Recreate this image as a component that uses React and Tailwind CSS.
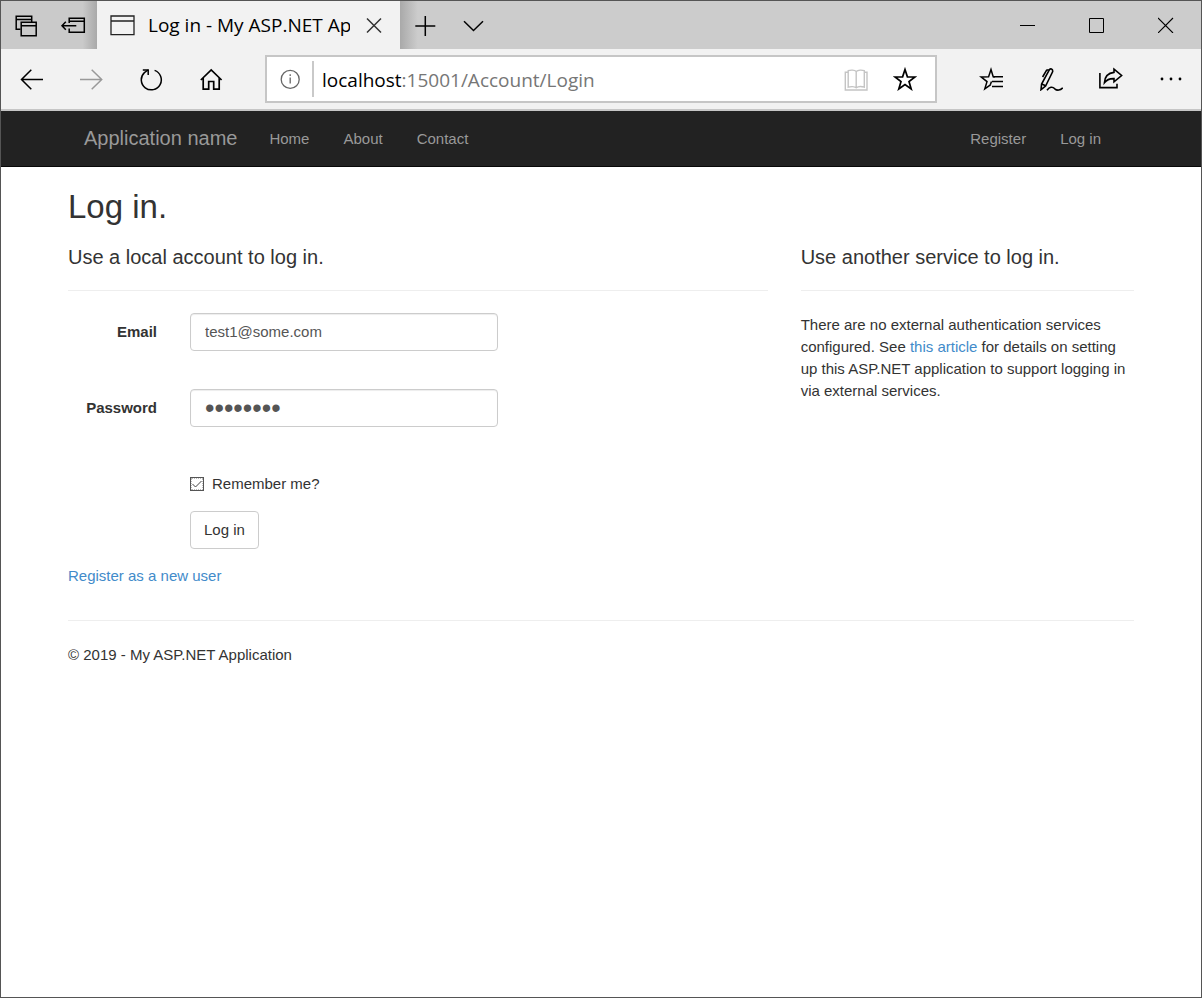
import { useState } from "react";

function Icon({ w = 24, h = 24, sw = 1.5, className = "", children }) {
  return (
    <svg
      width={w}
      height={h}
      viewBox={`0 0 ${w} ${h}`}
      fill="none"
      stroke="currentColor"
      strokeWidth={sw}
      className={`block shrink-0 ${className}`}
      aria-hidden="true"
    >
      {children}
    </svg>
  );
}

function IconButton({ label, className = "", children }) {
  return (
    <button type="button" aria-label={label} className={`flex shrink-0 items-center justify-center ${className}`}>
      {children}
    </button>
  );
}

function TitleBar() {
  return (
    <div className="flex h-12 bg-[#cccccc] text-black">
      <div className="flex bg-linear-to-r from-[#cacaca] from-85% to-[#a9a9a9]">
        <IconButton label="Tabs you've set aside" className="w-12">
          <Icon>
            <path d="M7.5 16.2H3.2V3.2H18.7V9M3.2 6.4H18.7" />
            <path d="M8.2 9.2H23.2V22.8H8.2ZM8.2 12.7H23.2" />
          </Icon>
        </IconButton>
        <IconButton label="Set these tabs aside" className="w-12">
          <Icon w={26}>
            <path d="M9.2 10V5.2H24.3V19.2H9.2V15.5M9.2 8.3H24.3" />
            <path d="M2 12.8H16.3M5.8 8.8L2 12.8L5.8 16.8" />
          </Icon>
        </IconButton>
      </div>
      <div className="flex w-[303px] items-center bg-[#f2f2f2] pl-[13px] pr-3">
        <Icon w={25} h={21} sw={1.3} className="text-[#222]">
          <path d="M1 1H24V19.6H1ZM1 6H24" />
        </Icon>
        <span className="ml-[13px] w-[202px] overflow-hidden whitespace-nowrap font-['Open_Sans','Noto_Sans',sans-serif] text-[19px] leading-7">
          Log in - My ASP.NET Application
        </span>
        <IconButton label="Close tab" className="ml-3 size-6">
          <Icon className="text-[#333]">
            <path d="M5 5.5L19 19.5M19 5.5L5 19.5" />
          </Icon>
        </IconButton>
      </div>
      <div className="flex flex-1 bg-linear-to-r from-[#a9a9a9] to-[#cccccc] to-3%">
        <IconButton label="New tab" className="w-[50px]">
          <Icon>
            <path d="M12.3 3V23M2.3 13H22.3" />
          </Icon>
        </IconButton>
        <IconButton label="Show tab previews" className="w-12">
          <Icon>
            <path d="M2 8.3L11.5 17.5L21 8.3" />
          </Icon>
        </IconButton>
      </div>
      <div className="flex pr-px">
        <IconButton label="Minimize" className="w-[69px]">
          <Icon w={16} h={16} sw={1}>
            <path d="M0 8.5H15" />
          </Icon>
        </IconButton>
        <IconButton label="Maximize" className="w-[69px]">
          <Icon w={16} h={16} sw={1}>
            <path d="M0.5 1.5H14.5V15.5H0.5Z" />
          </Icon>
        </IconButton>
        <IconButton label="Close" className="w-[69px]">
          <Icon w={16} h={16} sw={1.1}>
            <path d="M0 1L15 16M15 1L0 16" />
          </Icon>
        </IconButton>
      </div>
    </div>
  );
}

const STAR = "M12 2.5L14.4 9.8L22 10L16 14.6L18.2 22L12 17.6L5.8 22L8 14.6L2 10L9.6 9.8Z";

function Toolbar() {
  return (
    <div className="flex h-[62px] items-center border-b-2 border-[#c6c6c6] bg-[#f2f2f2] text-black">
      <IconButton label="Back" className="h-12 w-[60px]">
        <Icon>
          <path d="M2 12.5H24M12.3 2.8L2.5 12.5L12.3 22.3" />
        </Icon>
      </IconButton>
      <IconButton label="Forward" className="h-12 w-[60px] text-[#999]">
        <Icon>
          <path d="M1 12.5H23M12.7 2.8L22.7 12.5L12.7 22.3" />
        </Icon>
      </IconButton>
      <IconButton label="Refresh" className="h-12 w-[60px]">
        <Icon>
          <path d="M15.6 3.4A10 10 0 1 1 5.4 5.6L9 3" />
          <path d="M3.8 2.9H9.2V8" />
        </Icon>
      </IconButton>
      <IconButton label="Home" className="h-12 w-[60px]">
        <Icon sw={1.7}>
          <path d="M1.8 13L12.2 2.9L22.6 13M4.2 11V22.2H9.7V14.5H14.7V22.2H20.2V11" />
        </Icon>
      </IconButton>

      <div className="mx-6 flex h-12 min-w-0 flex-1 items-center border-2 border-[#c6c6c6] bg-white">
        <IconButton label="Site information" className="w-[45px] text-[#666]">
          <Icon sw={1.3}>
            <circle cx="12.2" cy="12.4" r="9" />
            <path d="M12.2 10.6V16.6M12.2 7.3V8.9" />
          </Icon>
        </IconButton>
        <span className="h-9 w-0.5 bg-[#c9c9c9]" />
        <span className="ml-2 flex-1 whitespace-nowrap pt-px font-['Open_Sans','Noto_Sans',sans-serif] text-[19px] leading-7 text-[#767676]">
          <span className="text-black">localhost</span>:15001/Account/Login
        </span>
        <IconButton label="Reading view" className="w-[49px] text-[#c4c4c4]">
          <Icon sw={1.4}>
            <path d="M12.2 4.5C10.5 2.8 6.5 2.8 4.2 3.7V20.2C6.5 19.4 10.5 19.4 12.2 20.8C14 19.4 18 19.4 20.3 20.2V3.7C18 2.8 14 2.8 12.2 4.5V20.8" />
            <path d="M4 5.2H1.3V23H23V5.2H20.5" />
          </Icon>
        </IconButton>
        <IconButton label="Add to favorites" className="mr-1.5 w-[49px]">
          <Icon sw={1.7}>
            <path d={STAR} />
          </Icon>
        </IconButton>
      </div>

      <IconButton label="Favorites" className="h-12 w-[60px]">
        <Icon>
          <path d="M16 9.7H14.2L12 2.5L9.6 9.7L2 9.9L8 14.6L5.8 21.8L11.8 17.6" />
          <path d="M14.2 9.7H24M13 14.5H24M13 19.5H24" />
          <path d="M12.5 14.5L11.3 17.8" />
        </Icon>
      </IconButton>
      <IconButton label="Add notes" className="h-12 w-[60px]">
        <Icon sw={1.6}>
          <path d="M10 3.4C11.2 0.8 14.2 2 13.6 4.8L6.6 19L2 22.7L2.6 17L10 3.4Z" />
          <path d="M9.8 2.8L7.6 3.2L3.6 10M2.8 17L6.6 18.8" />
          <path d="M8 23.2C10.5 19.8 13.5 19.4 15.8 21.8C18 23.9 21.5 23.4 23.8 20.8" />
        </Icon>
      </IconButton>
      <IconButton label="Share" className="h-12 w-[60px]">
        <Icon sw={1.6}>
          <path d="M0.9 6V20.6H18V16.8" />
          <path d="M15 2.2L22.6 8.5L15 14.8V11.6C11 11.4 7.8 12.6 5.4 15.7C5.8 9.7 9.6 6 15 5.4Z" />
        </Icon>
      </IconButton>
      <IconButton label="Settings and more" className="h-12 w-[60px]">
        <Icon>
          <g fill="currentColor" stroke="none">
            <circle cx="3" cy="12" r="1.4" />
            <circle cx="12" cy="12" r="1.4" />
            <circle cx="21" cy="12" r="1.4" />
          </g>
        </Icon>
      </IconButton>
    </div>
  );
}

function Navbar() {
  return (
    <nav className="flex h-14 items-center border-b border-[#080808] bg-[#222222] px-[83px] text-[#999999]">
      <a href="#home" className="pb-0.5 text-xl leading-6">Application name</a>
      <div className="ml-8 flex flex-1 gap-[34px]">
        <a href="#home">Home</a>
        <a href="#about">About</a>
        <a href="#contact">Contact</a>
      </div>
      <div className="flex gap-[34px] pr-[17px]">
        <a href="#register">Register</a>
        <a href="#login">Log in</a>
      </div>
    </nav>
  );
}

const FIELD =
  "h-[38px] w-full rounded border border-[#cccccc] bg-white px-3.5 text-[#555555] shadow-[inset_0_1px_1px_rgba(0,0,0,0.075)] outline-none";

function LoginForm() {
  const [email, setEmail] = useState("test1@some.com");
  const [password, setPassword] = useState("password");
  const [remember, setRemember] = useState(true);
  return (
    <form onSubmit={(e) => e.preventDefault()} className="grid grid-cols-[89px_308px] items-center gap-x-[33px]">
      <label htmlFor="email" className="text-right font-bold">Email</label>
      <input id="email" type="text" value={email} onChange={(e) => setEmail(e.target.value)} className={`${FIELD} pb-0.5`} />

      <label htmlFor="password" className="mt-[38px] text-right font-bold">Password</label>
      <div className="mt-[38px]">
        <input
          id="password"
          type="password"
          value={password}
          onChange={(e) => setPassword(e.target.value)}
          className={`${FIELD} text-[27px]`}
        />
      </div>

      <div className="col-start-2 mt-[46px] flex items-center gap-2">
        <span className="grid size-3.5">
          <input
            id="remember"
            type="checkbox"
            checked={remember}
            onChange={(e) => setRemember(e.target.checked)}
            className="peer col-start-1 row-start-1 size-3.5 appearance-none border border-[#555] bg-white outline-1 -outline-offset-2 outline-dotted outline-[#bbb]"
          />
          <svg
            viewBox="0 0 14 14"
            className="pointer-events-none invisible col-start-1 row-start-1 size-3.5 peer-checked:visible"
            fill="none"
            stroke="#444"
            aria-hidden="true"
          >
            <path d="M2.5 7L5.5 10L11.5 4" />
          </svg>
        </span>
        <label htmlFor="remember">Remember me?</label>
      </div>

      <div className="col-start-2 mt-4">
        <button type="submit" className="block h-[38px] rounded border border-[#cccccc] bg-white px-[13px]">
          Log in
        </button>
      </div>
    </form>
  );
}

export default function App() {
  return (
    <div className="flex min-h-screen flex-col border border-[#555] bg-white font-['Liberation_Sans',Arial,sans-serif] text-[15px] leading-[22px] text-[#333333]">
      <TitleBar />
      <Toolbar />
      <Navbar />
      <main className="px-[67px] pt-[22px]">
        <h2 className="text-[33px] leading-9">Log in.</h2>
        <div className="mt-[21px] grid grid-cols-12 gap-x-[33px]">
          <section className="col-span-8">
            <h4 className="text-xl leading-[22px]">Use a local account to log in.</h4>
            <hr className="my-[22px] border-[#eeeeee]" />
            <LoginForm />
            <p className="mt-4">
              <a href="#register" className="text-[#428bca]">Register as a new user</a>
            </p>
          </section>
          <section className="col-span-4">
            <h4 className="text-xl leading-[22px]">Use another service to log in.</h4>
            <hr className="mb-[23px] mt-[22px] border-[#eeeeee]" />
            <p>
              There are no external authentication services configured. See{" "}
              <a href="#article" className="text-[#428bca]">this article</a> for details on setting up this ASP.NET
              application to support logging in via external services.
            </p>
          </section>
        </div>
        <hr className="mb-[23px] mt-[33px] border-[#eeeeee]" />
        <footer>© 2019 - My ASP.NET Application</footer>
      </main>
    </div>
  );
}
